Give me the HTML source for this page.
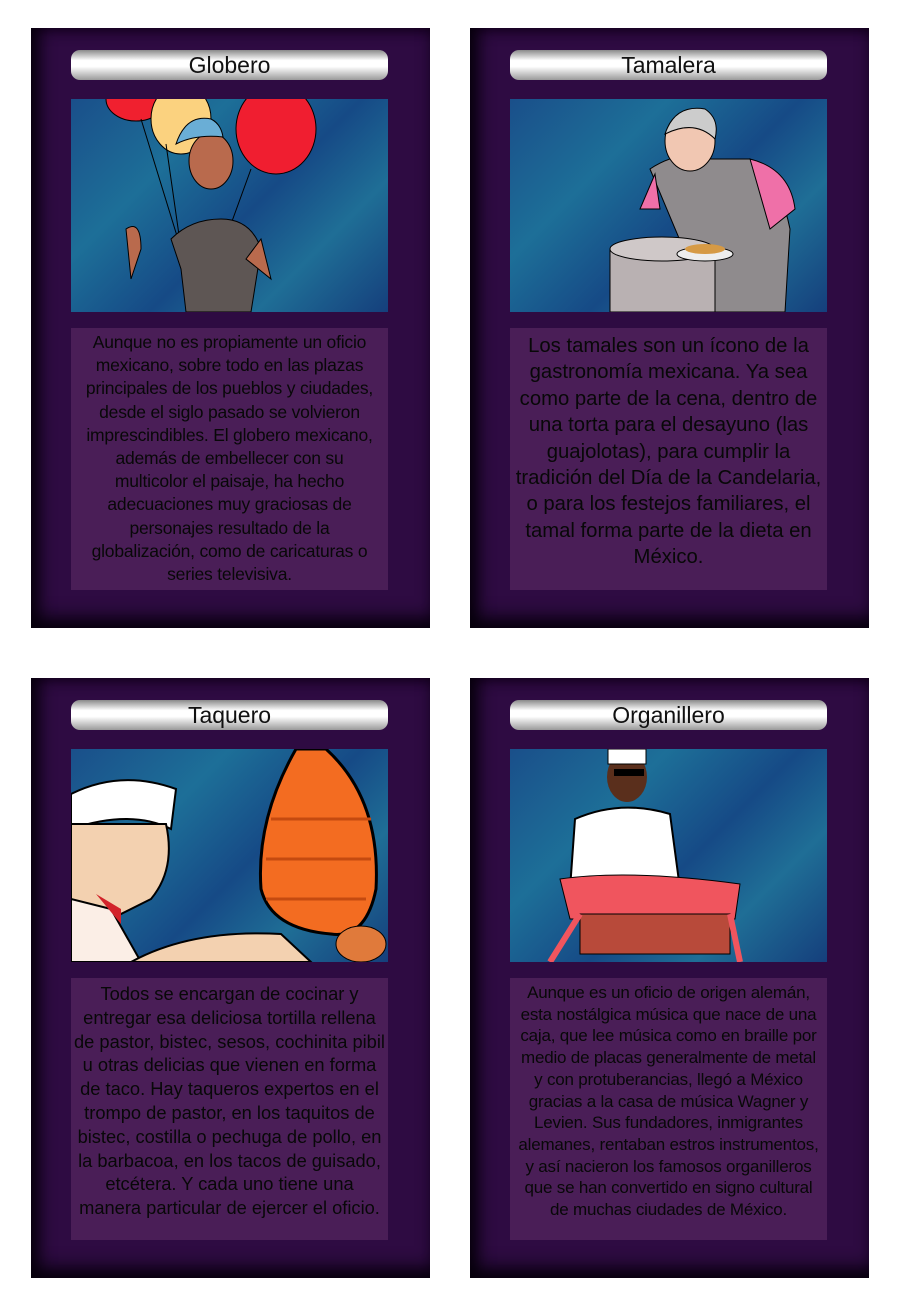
<!DOCTYPE html>
<html><head><meta charset="utf-8"><style>
body{margin:0;width:900px;height:1299px;background:#fff;position:relative;font-family:"Liberation Sans",sans-serif;overflow:hidden}
.card{position:absolute;width:399px;height:600px;background:#2e0b42;box-shadow:inset 14px 0 16px -6px #07000c,inset 0 -16px 18px -6px #07000c,inset 0 10px 12px -6px #1a0026;}
.title{position:absolute;left:40px;top:22px;width:317px;height:30px;border-radius:9px;background:linear-gradient(#8a8a8a,#fff 35%,#fff 55%,#9a9a9a);text-align:center;font-size:23px;line-height:30px;color:#111;}
.img{position:absolute;left:40px;top:71px;width:317px;height:213px;overflow:hidden;background:linear-gradient(135deg,#1a4f8a,#1d6f98 30%,#164a86 55%,#1f6e96 75%,#153f7c)}
.txt{position:absolute;left:40px;top:300px;width:317px;height:262px;background:#4a1e57;color:#080808;text-align:center;white-space:nowrap;overflow:hidden}
</style></head><body>

<div class="card" style="left:31px;top:28px">
<div class="title">Globero</div>
<div class="img"><svg width="317" height="213">
<ellipse cx="65" cy="0" rx="30" ry="22" fill="#f0202f" stroke="#000"/>
<ellipse cx="110" cy="20" rx="30" ry="35" fill="#fbd27f" stroke="#000"/>
<ellipse cx="205" cy="30" rx="40" ry="45" fill="#f01e30" stroke="#000"/>
<path d="M70 20 L110 150 M95 45 L110 150 M180 70 L140 180" stroke="#000" fill="none"/>
<path d="M100 140 Q120 120 150 120 Q180 120 190 150 L180 213 L115 213 L110 170 Z" fill="#5e5654" stroke="#000"/>
<path d="M55 130 Q70 120 70 150 L70 150 L60 180 Z" fill="#b96a4d" stroke="#000"/>
<path d="M190 140 L200 180 L175 160 Z" fill="#b96a4d" stroke="#000"/>
<ellipse cx="140" cy="62" rx="22" ry="28" fill="#b96a4d" stroke="#000"/>
<path d="M105 45 Q115 15 140 20 Q150 25 152 38 Q125 35 105 45Z" fill="#6aaed6" stroke="#000"/>
</svg></div>
<div class="txt" style="font-size:17.5px;line-height:23.2px;padding-top:3px;height:259px;letter-spacing:-0.2px">Aunque no es propiamente un oficio<br>mexicano, sobre todo en las plazas<br>principales de los pueblos y ciudades,<br>desde el siglo pasado se volvieron<br>imprescindibles. El globero mexicano,<br>además de embellecer con su<br>multicolor el paisaje, ha hecho<br>adecuaciones muy graciosas de<br>personajes resultado de la<br>globalización, como de caricaturas o<br>series televisiva.</div>
</div>

<div class="card" style="left:470px;top:28px">
<div class="title">Tamalera</div>
<div class="img"><svg width="317" height="213">
<path d="M140 70 Q170 50 200 60 L240 60 Q270 80 280 130 L275 213 L200 213 Z" fill="#8f8b8d" stroke="#000"/>
<path d="M240 60 Q280 70 285 110 L260 130 Z" fill="#ef70a8" stroke="#000"/>
<path d="M145 75 L130 110 L150 110 Z" fill="#ef70a8" stroke="#000"/>
<ellipse cx="180" cy="42" rx="25" ry="30" fill="#f1c7b2" stroke="#000"/>
<path d="M155 35 Q165 5 195 10 Q210 20 205 40 Q185 20 155 35Z" fill="#ccc" stroke="#000"/>
<rect x="100" y="150" width="105" height="63" fill="#b9b1b2" stroke="#000"/>
<ellipse cx="152" cy="150" rx="52" ry="12" fill="#cfc8c8" stroke="#000"/>
<ellipse cx="195" cy="155" rx="28" ry="7" fill="#eee" stroke="#000"/>
<ellipse cx="195" cy="150" rx="20" ry="5" fill="#d69a45"/>
</svg></div>
<div class="txt" style="font-size:20.3px;line-height:26.4px;padding-top:5px;height:257px">Los tamales son un ícono de la<br>gastronomía mexicana. Ya sea<br>como parte de la cena, dentro de<br>una torta para el desayuno (las<br>guajolotas), para cumplir la<br>tradición del Día de la Candelaria,<br>o para los festejos familiares, el<br>tamal forma parte de la dieta en<br>México.</div>
</div>

<div class="card" style="left:31px;top:678px">
<div class="title">Taquero</div>
<div class="img"><svg width="317" height="213">
<path d="M0 45 Q50 20 105 40 L100 80 Q60 60 0 80Z" fill="#fff" stroke="#000" stroke-width="2"/>
<path d="M5 75 L95 75 Q105 120 80 150 L40 170 L0 213 L0 75Z" fill="#f3d1b0" stroke="#000" stroke-width="2"/>
<path d="M0 150 L40 160 L70 213 L0 213Z" fill="#fbeee6" stroke="#000" stroke-width="2"/>
<path d="M25 145 L50 160 L50 175Z" fill="#d2232a"/>
<path d="M60 213 Q120 180 210 185 L240 213Z" fill="#f3d1b0" stroke="#000" stroke-width="2"/>
<path d="M225 0 L255 0 Q310 50 305 140 Q295 190 260 185 Q200 180 190 140 Q185 70 225 0Z" fill="#f36c21" stroke="#000" stroke-width="3"/>
<path d="M200 70 L300 70 M195 110 L300 110 M195 150 L295 150" stroke="#c44a10" stroke-width="3"/>
<ellipse cx="290" cy="195" rx="25" ry="18" fill="#e07a3b" stroke="#000"/>
</svg></div>
<div class="txt" style="font-size:18.3px;line-height:23.8px;padding-top:4px;height:258px">Todos se encargan de cocinar y<br>entregar esa deliciosa tortilla rellena<br>de pastor, bistec, sesos, cochinita pibil<br>u otras delicias que vienen en forma<br>de taco. Hay taqueros expertos en el<br>trompo de pastor, en los taquitos de<br>bistec, costilla o pechuga de pollo, en<br>la barbacoa, en los tacos de guisado,<br>etcétera. Y cada uno tiene una<br>manera particular de ejercer el oficio.</div>
</div>

<div class="card" style="left:470px;top:678px">
<div class="title">Organillero</div>
<div class="img"><svg width="317" height="213">
<path d="M65 70 Q110 50 160 65 L170 140 L60 140Z" fill="#fff" stroke="#000" stroke-width="2"/>
<ellipse cx="117" cy="28" rx="20" ry="25" fill="#5a2f1c"/>
<rect x="98" y="0" width="38" height="15" fill="#fff" stroke="#000"/>
<rect x="104" y="20" width="30" height="7" fill="#000"/>
<path d="M50 130 Q120 120 230 135 L225 170 L60 170Z" fill="#f0555e" stroke="#000"/>
<rect x="70" y="165" width="150" height="40" fill="#b84a3a" stroke="#000"/>
<path d="M40 213 L70 165 M230 213 L220 165" stroke="#f0555e" stroke-width="6"/>
</svg></div>
<div class="txt" style="font-size:17px;line-height:21.7px;padding-top:4px;height:258px;letter-spacing:-0.2px">Aunque es un oficio de origen alemán,<br>esta nostálgica música que nace de una<br>caja, que lee música como en braille por<br>medio de placas generalmente de metal<br>y con protuberancias, llegó a México<br>gracias a la casa de música Wagner y<br>Levien. Sus fundadores, inmigrantes<br>alemanes, rentaban estros instrumentos,<br>y así nacieron los famosos organilleros<br>que se han convertido en signo cultural<br>de muchas ciudades de México.</div>
</div>

</body></html>
